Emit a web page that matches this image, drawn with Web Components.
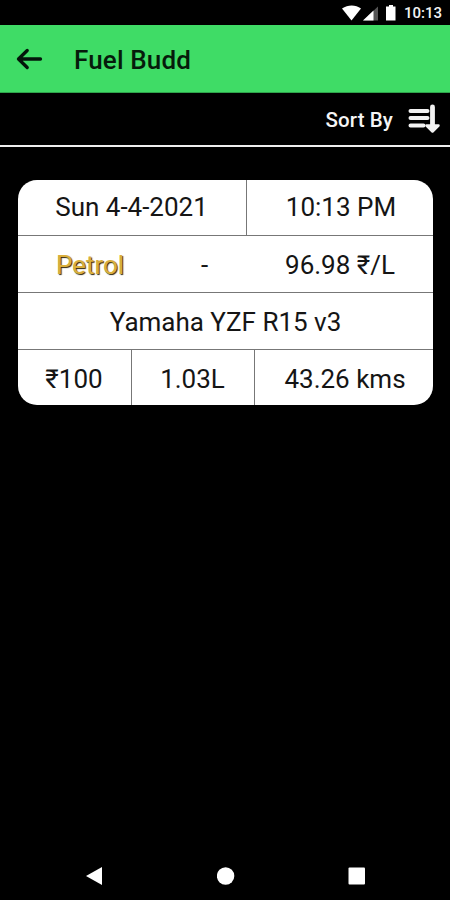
<!DOCTYPE html>
<html lang="en">
<head>
<meta charset="utf-8">
<title>Fuel Budd</title>
<style>
    html, body {
        margin: 0;
        height: 100%;
        background: #000;
    }
</style>
</head>
<body>
<fuel-app></fuel-app>

<script>
class StatusBar extends HTMLElement {
    constructor() {
        super();
        this.attachShadow({mode: 'open'});
    }

    connectedCallback() {
        this.shadowRoot.innerHTML = `
        <style>
            :host {
                display: flex;
                justify-content: flex-end;
                align-items: center;
                height: 25px;
                padding-right: 8px;
                box-sizing: border-box;
                color: #f4f4f4;
                font-size: 15px;
                font-weight: 500;
                line-height: 25px;
            }

            svg {
                display: block;
                fill: #fff;
            }

            span {
                margin-left: 6px;
                padding-top: 2px;
            }
        </style>
        <svg width="56" height="25" viewBox="0 0 56 25">
            <path d="M0 8.500C6 4.600 13.500 4.600 19 8.500L9.500 20.500Z"/>
            <path d="M36 6.500V20.500H21Z" fill="#555"/>
            <path d="M31.500 10.500V20.500H21Z"/>
            <path d="M47 5h4v1.500h2.500v14h-9.500v-14h3Z"/>
        </svg>
        <span><slot></slot></span>
        `;
    }
}

class AppBar extends HTMLElement {
    constructor() {
        super();
        this.attachShadow({mode: 'open'});
    }

    connectedCallback() {
        this.shadowRoot.innerHTML = `
        <style>
            :host {
                display: flex;
                align-items: center;
                height: 68px;
                padding-left: 16px;
                box-sizing: border-box;
                background: #3fdc66;
                border-bottom: 1px solid #2fa44c;
                color: #061b0b;
            }

            svg {
                display: block;
                fill: none;
                stroke: #03150a;
                stroke-width: 3.3;
                stroke-linecap: round;
                stroke-linejoin: round;
            }

            h1 {
                margin: 0 0 0 31px;
                padding-top: 2px;
                font-size: 26px;
                font-weight: 500;
                line-height: 30px;
                letter-spacing: 0.15px;
            }
        </style>
        <svg width="27" height="24" viewBox="0 0 27 24">
            <path d="M24.500 12H2.500M11.200 3.500L2.500 12L11.200 20.500"/>
        </svg>
        <h1><slot></slot></h1>
        `;
    }
}

class SortBar extends HTMLElement {
    constructor() {
        super();
        this.attachShadow({mode: 'open'});
    }

    connectedCallback() {
        this.shadowRoot.innerHTML = `
        <style>
            :host {
                display: flex;
                justify-content: flex-end;
                align-items: center;
                height: 54px;
                padding-right: 9px;
                box-sizing: border-box;
                border-bottom: 2px solid #eee;
                color: #f5f5f5;
                font-size: 20.5px;
                font-weight: 500;
                letter-spacing: 0.1px;
            }

            span {
                padding-top: 1px;
            }

            svg {
                display: block;
                margin-left: 15px;
                fill: none;
                stroke: #f2f2f2;
                stroke-linecap: round;
                stroke-linejoin: round;
            }
        </style>
        <span><slot></slot></span>
        <svg width="33" height="32" viewBox="0 0 33 32">
            <path d="M2.500 8H19.500M2.500 15H19.500M2.500 22.500H15.500" stroke-width="4"/>
            <path d="M24.500 4V25" stroke-width="4.800"/>
            <path d="M18.500 22.500H30.500L24.500 28.500Z" fill="#f2f2f2" stroke-width="2.500"/>
        </svg>
        `;
    }
}

class FuelCell extends HTMLElement {
    constructor() {
        super();
        this.attachShadow({mode: 'open'});
    }

    connectedCallback() {
        this.shadowRoot.innerHTML = `
        <style>
            :host {
                display: flex;
                justify-content: center;
                align-items: center;
                box-sizing: border-box;
                padding-top: 2px;
                white-space: nowrap;
            }

            :host([divider]) {
                padding-right: 1px;
                border-right: 1px solid #777;
            }

            :host([last]) {
                padding-left: 2px;
            }

            :host([top]) {
                padding-top: 0;
                padding-bottom: 1px;
            }

            :host([fuel]) {
                color: #d9ae3c;
                text-shadow: 1px 1px 1px #30260c;
            }
        </style>
        <slot></slot>
        `;
    }
}

class FuelRow extends HTMLElement {
    constructor() {
        super();
        this.attachShadow({mode: 'open'});
    }

    connectedCallback() {
        this.shadowRoot.innerHTML = `
        <style>
            :host {
                display: grid;
                grid-template-columns: ${this.getAttribute('columns') || '1fr'};
                box-sizing: border-box;
                border-bottom: 1px solid #777;
            }

            :host(:last-of-type) {
                border-bottom: 0;
            }
        </style>
        <slot></slot>
        `;
    }
}

class FuelCard extends HTMLElement {
    constructor() {
        super();
        this.attachShadow({mode: 'open'});
    }

    connectedCallback() {
        this.shadowRoot.innerHTML = `
        <style>
            :host {
                display: grid;
                grid-template-rows: 56px 57px 57px 55px;
                margin: 33px 17px 0 18px;
                border-radius: 19px;
                background: #fff;
                color: #151515;
                font-size: 26px;
                line-height: 30px;
                overflow: hidden;
            }
        </style>
        <slot></slot>
        `;
    }
}

class NavBar extends HTMLElement {
    constructor() {
        super();
        this.attachShadow({mode: 'open'});
    }

    connectedCallback() {
        this.shadowRoot.innerHTML = `
        <style>
            :host {
                display: flex;
                justify-content: space-between;
                align-items: center;
                height: 50px;
                margin-top: auto;
                padding: 1px 84px 0 85px;
                box-sizing: border-box;
            }

            svg {
                display: block;
                fill: #fff;
            }
        </style>
        <svg width="18" height="18"><path d="M1 9L17 0V18Z"/></svg>
        <svg width="18" height="18"><circle cx="8.600" cy="9" r="8.700"/></svg>
        <svg width="18" height="18"><rect x="0.500" y="0.500" width="16.500" height="17" rx="1"/></svg>
        `;
    }
}

class FuelApp extends HTMLElement {
    constructor() {
        super();
        this.attachShadow({mode: 'open'});
    }

    connectedCallback() {
        this.shadowRoot.innerHTML = `
        <style>
            :host {
                display: flex;
                flex-direction: column;
                width: 450px;
                height: 900px;
                background: #000;
                font-family: Roboto, "Noto Sans", sans-serif;
            }
        </style>
        <status-bar>10:13</status-bar>
        <app-bar>Fuel Budd</app-bar>
        <sort-bar>Sort By</sort-bar>
        <fuel-card>
            <fuel-row columns="229px 1fr">
                <fuel-cell top divider>Sun 4-4-2021</fuel-cell>
                <fuel-cell top last>10:13 PM</fuel-cell>
            </fuel-row>
            <fuel-row columns="144px 85px 1fr">
                <fuel-cell fuel>Petrol</fuel-cell>
                <fuel-cell>-</fuel-cell>
                <fuel-cell>96.98 ₹/L</fuel-cell>
            </fuel-row>
            <fuel-row>
                <fuel-cell>Yamaha YZF R15 v3</fuel-cell>
            </fuel-row>
            <fuel-row columns="114px 123px 1fr">
                <fuel-cell divider>₹100</fuel-cell>
                <fuel-cell divider>1.03L</fuel-cell>
                <fuel-cell last>43.26 kms</fuel-cell>
            </fuel-row>
        </fuel-card>
        <nav-bar></nav-bar>
        `;
    }
}

window.customElements.define('status-bar', StatusBar);
window.customElements.define('app-bar', AppBar);
window.customElements.define('sort-bar', SortBar);
window.customElements.define('fuel-cell', FuelCell);
window.customElements.define('fuel-row', FuelRow);
window.customElements.define('fuel-card', FuelCard);
window.customElements.define('nav-bar', NavBar);
window.customElements.define('fuel-app', FuelApp);
</script>
</body>
</html>
